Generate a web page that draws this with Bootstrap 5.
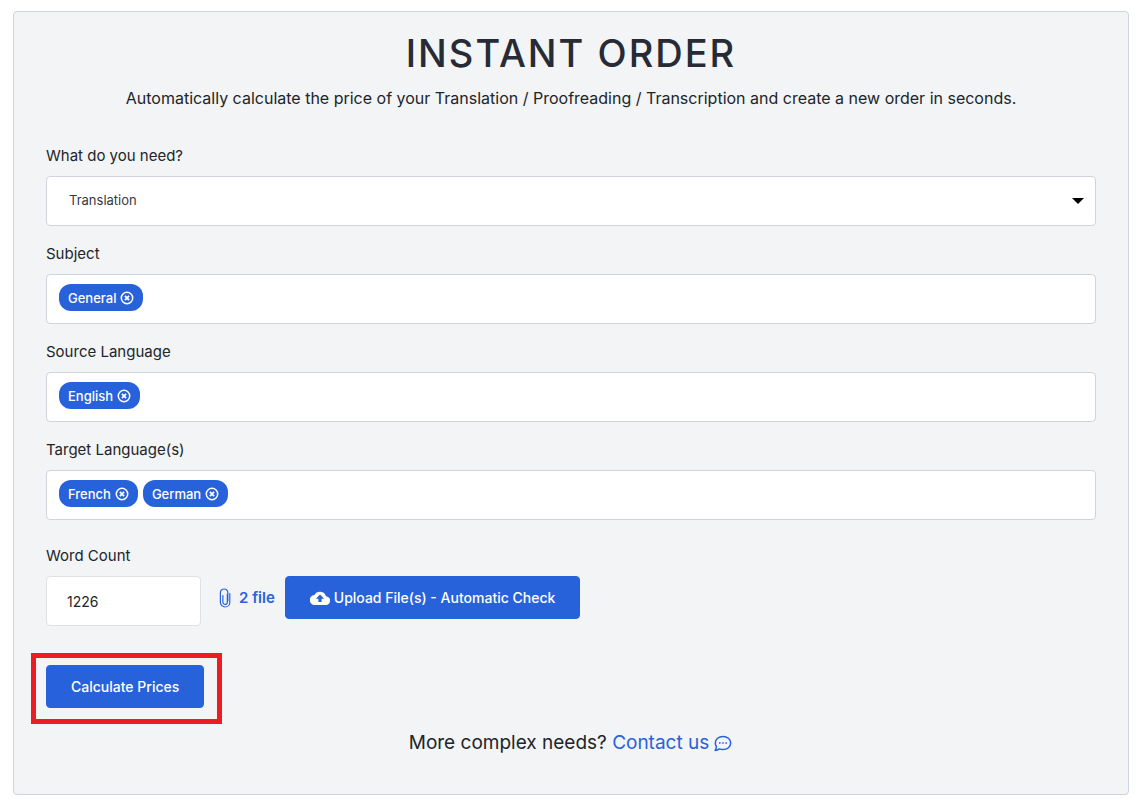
<!DOCTYPE html>
<html lang="en">
<head>
<meta charset="utf-8">
<meta name="viewport" content="width=device-width, initial-scale=1">
<title>Instant Order</title>
<link href="https://cdn.jsdelivr.net/npm/bootstrap@5.3.0/dist/css/bootstrap.min.css" rel="stylesheet">
<style>
  :root { --brand: #2862db; --line: #ced4da; }
  body { font-family: Inter, Roboto, sans-serif; font-size: 16px; line-height: 24px; color: #212529; background: #fff; }
  .order-page { padding: 11px 14px 17px 13px; }
  .order-panel { background: #f2f4f6; border: 1px solid var(--line); border-radius: 4px; padding: 12px 32px 39px; }
  .order-title { font-size: 38px; font-weight: 500; line-height: 58px; letter-spacing: 2px; color: #272b35; }
  .order-intro { margin-bottom: 34px; }
  .form-label { font-size: 15px; }
  .field-box { height: 50px; border: 1px solid var(--line); border-radius: 4px; background-color: #fff; }
  .form-select.field-box { font-size: 13px; line-height: 20px; padding: 0 40px 2px 22px; color: #343a40;
    background-image: url("data:image/svg+xml,%3Csvg xmlns='http://www.w3.org/2000/svg' viewBox='0 0 12 6'%3E%3Cpath d='M0 0h12L6 6z'/%3E%3C/svg%3E");
    background-size: 12px 6px; background-position: right 11px center; }
  .tag-field { padding: 9px 12px; gap: 5px; }
  .tag-field input { min-width: 0; height: 27px; border: 0; outline: 0; background: transparent; font-size: 13px; }
  .tag-pill { height: 27px; padding: 0 9px; gap: 4px; border: 0; border-radius: 12px; background: var(--brand); color: #fff; font-size: 13px; font-weight: 500; line-height: 20px; }
  .word-count { width: 155px; padding: 0 20px; font-size: 14px; border-color: #dee2e6; }
  .btn-brand { --bs-btn-color: #fff; --bs-btn-bg: var(--brand); --bs-btn-border-color: var(--brand); --bs-btn-hover-color: #fff; --bs-btn-hover-bg: #1f52bd; --bs-btn-hover-border-color: #1f52bd;
    height: 43px; padding: 0 24px; border-radius: 4px; font-size: 14px; font-weight: 500; }
  .file-count { height: 43px; margin-left: 18px; margin-right: 10px; gap: 8px; color: var(--brand); font-size: 15px; font-weight: 600; text-decoration: none; }
  .highlight-frame { width: fit-content; margin: 27px 0 0 -15px; padding: 7px 13px 11px 10px; border: 5px solid #ed1c24; }
  .contact-line { margin-top: 7px; font-size: 19px; }
  .contact-line a { color: var(--brand); text-decoration: none; }
</style>
</head>
<body>
<svg class="d-none" aria-hidden="true">
  <symbol id="remove" viewBox="0 0 14 14"><circle cx="7" cy="7" r="5.7" fill="none" stroke="#fff" stroke-width="1.5"/><path d="M4.900 4.900l4.200 4.200M9.100 4.900L4.900 9.100" stroke="#fff" stroke-width="1.800"/></symbol>
</svg>
<main class="order-page">
  <section class="order-panel">
    <h1 class="order-title text-center mb-1">INSTANT ORDER</h1>
    <p class="order-intro text-center">Automatically calculate the price of your Translation / Proofreading / Transcription and create a new order in seconds.</p>
    <form>
      <div class="mb-3">
        <label class="form-label d-block mb-2" for="service">What do you need?</label>
        <select class="form-select field-box" id="service"><option>Translation</option></select>
      </div>
      <div class="mb-3">
        <label class="form-label d-block mb-2" for="subject">Subject</label>
        <div class="field-box tag-field d-flex">
          <button type="button" class="tag-pill d-flex align-items-center">General <svg width="14" height="14"><use href="#remove"/></svg></button>
          <input class="flex-grow-1" type="text" id="subject">
        </div>
      </div>
      <div class="mb-3">
        <label class="form-label d-block mb-2" for="source">Source Language</label>
        <div class="field-box tag-field d-flex">
          <button type="button" class="tag-pill d-flex align-items-center">English <svg width="14" height="14"><use href="#remove"/></svg></button>
          <input class="flex-grow-1" type="text" id="source">
        </div>
      </div>
      <div class="mb-4">
        <label class="form-label d-block mb-2" for="target">Target Language(s)</label>
        <div class="field-box tag-field d-flex">
          <button type="button" class="tag-pill d-flex align-items-center">French <svg width="14" height="14"><use href="#remove"/></svg></button>
          <button type="button" class="tag-pill d-flex align-items-center">German <svg width="14" height="14"><use href="#remove"/></svg></button>
          <input class="flex-grow-1" type="text" id="target">
        </div>
      </div>
      <label class="form-label d-block mb-2" for="words">Word Count</label>
      <div class="d-flex align-items-start flex-wrap">
        <input class="form-control field-box word-count" type="text" inputmode="numeric" id="words" value="1226">
        <a href="#" class="file-count d-flex align-items-center">
          <svg width="12" height="20" viewBox="0 0 12 20" fill="none" stroke="currentColor" stroke-width="1.2" stroke-linecap="round"><path d="M8.300 6v8.200a2.200 2.200 0 0 1-4.400 0V7.500M8.800 13V4.300a3.700 3.300 0 0 0-7.400 0v10.200a4.700 4.500 0 0 0 9.400 0V5.500"/></svg>
          <span>2 file</span>
        </a>
        <button type="button" class="btn btn-brand d-flex align-items-center gap-1">
          <svg width="20" height="14" viewBox="0 0 20 14"><path fill="#fff" d="M16 5.2A6.3 6.3 0 0 0 4.4 4 4.9 4.9 0 0 0 5 14h10.500a4.400 4.400 0 0 0 .5-8.800z"/><path d="M10 3.600L5.800 7.800h2.600V11h3.200V7.800h2.600z" fill="#2862db"/></svg>
          Upload File(s) - Automatic Check
        </button>
      </div>
      <div class="highlight-frame">
        <button type="submit" class="btn btn-brand">Calculate Prices</button>
      </div>
    </form>
    <p class="contact-line d-flex justify-content-center mb-0">
      <span>More complex needs?&nbsp;</span>
      <a href="#" class="d-flex align-items-center gap-1">Contact us
        <svg width="20" height="18" viewBox="0 0 20 18" fill="none" stroke="currentColor" stroke-width="1.500" stroke-linejoin="round"><path d="M3.400 12.700A6.600 6.600 0 0 1 2.300 9C2.300 5.200 5.700 2.400 10 2.400s7.700 2.800 7.700 6.600-3.400 6.600-7.700 6.600c-1.300 0-2.500-.2-3.600-.7-1.200.9-2.600 1.500-4.300 1.500.7-.9 1.200-2 1.300-3.700z"/><path d="M6 9h1.600M9.200 9h1.600M12.400 9H14" stroke-width="1.600"/></svg>
      </a>
    </p>
  </section>
</main>
<script src="https://cdn.jsdelivr.net/npm/bootstrap@5.3.0/dist/js/bootstrap.bundle.min.js"></script>
</body>
</html>
